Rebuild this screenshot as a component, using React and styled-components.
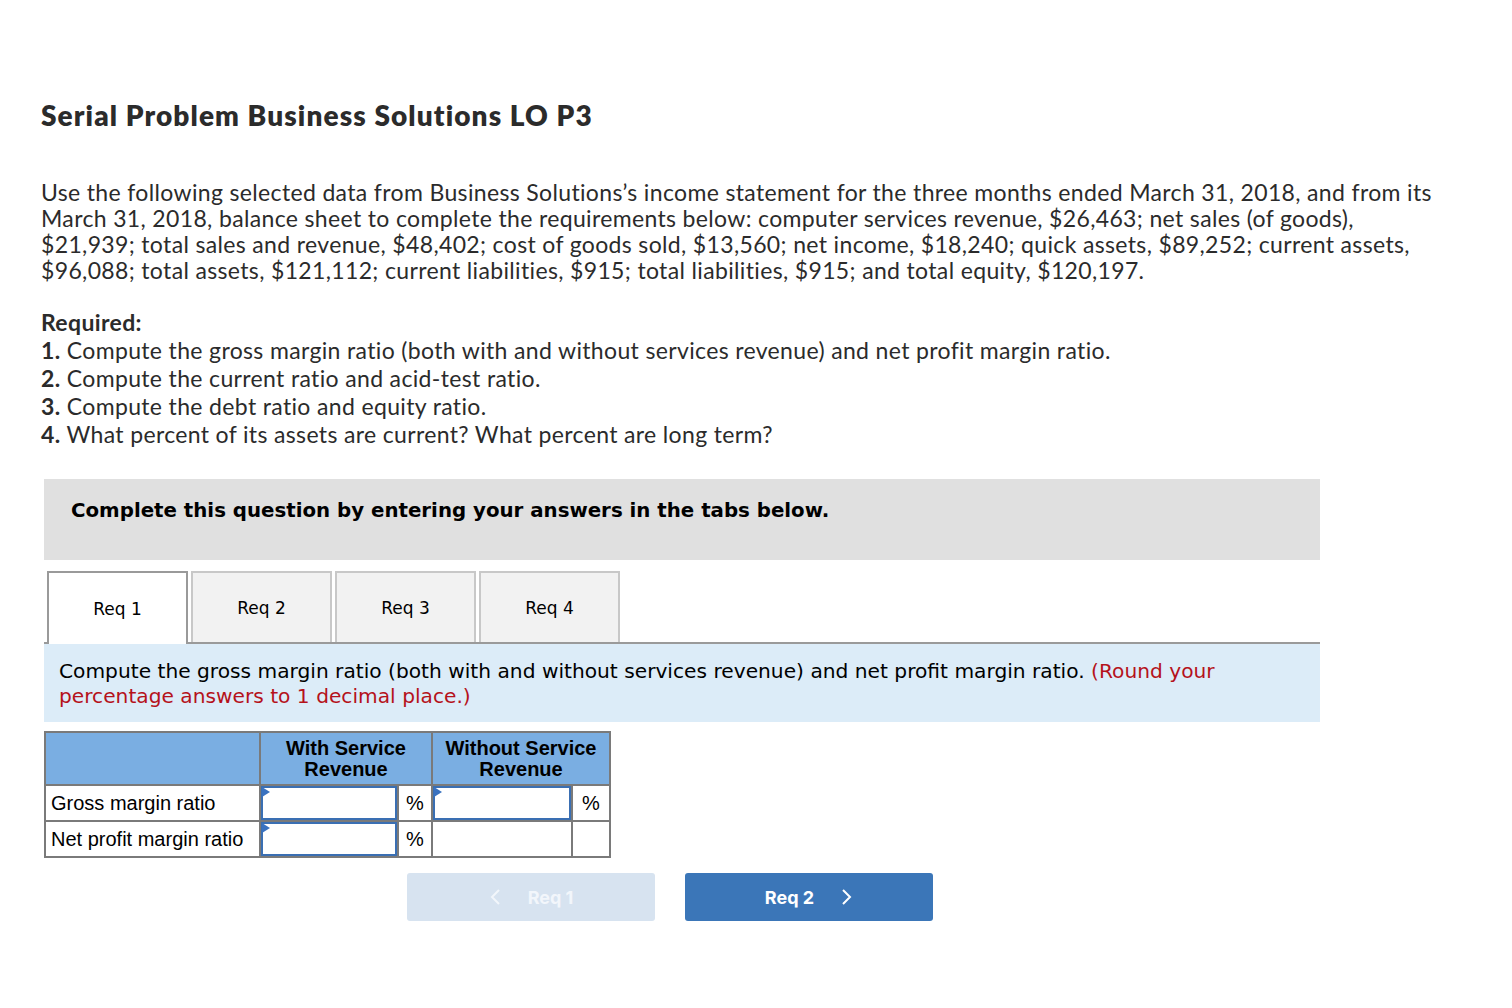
import React from 'react';
import styled, { createGlobalStyle } from 'styled-components';

const Global = createGlobalStyle`
  body {
    margin: 0;
    background: #fff;
    font-family: "Lato", "Open Sans", sans-serif;
    color: #2b2b2b;
  }
`;

const Page = styled.div`
  padding: 98px 0 0 41px;
`;

const Title = styled.h1`
  margin: 0;
  font-size: 28px;
  font-weight: 800;
  line-height: 34px;
  letter-spacing: 1.1px;
  color: #2b2b2b;
`;

const Para = styled.p`
  margin: 47px 0 0;
  font-size: 23px;
  line-height: 26px;
  letter-spacing: 0.35px;
  white-space: nowrap;
`;

const Required = styled.div`
  margin-top: 25px;
  font-size: 23px;
  line-height: 28px;
  letter-spacing: 0.35px;
  white-space: nowrap;
`;

const Work = styled.div`
  margin: 31px 0 0 3px;
  width: 1276px;
`;

const Banner = styled.div`
  background: #e0e0e0;
  height: 81px;
  padding: 20px 0 0 27px;
  box-sizing: border-box;
  font-family: "DejaVu Sans", Verdana, sans-serif;
  font-weight: 700;
  font-size: 19.8px;
  color: #000;
`;

const Tabs = styled.div`
  display: flex;
  gap: 3px;
  margin-top: 11px;
  padding-left: 3px;
  border-bottom: 2px solid #9a9a9a;
`;

const Tab = styled.div`
  width: 141px;
  box-sizing: border-box;
  display: flex;
  align-items: center;
  justify-content: center;
  font-family: "DejaVu Sans", Tahoma, sans-serif;
  font-size: 17px;
  color: #000;
  background: ${p => (p.active ? '#fff' : '#f2f2f2')};
  border: 2px solid ${p => (p.active ? '#9a9a9a' : '#c8c8c8')};
  border-bottom: none;
  margin-bottom: ${p => (p.active ? '-2px' : '0')};
  height: ${p => (p.active ? '73px' : '71px')};
`;

const Prompt = styled.div`
  background: #dcecf8;
  padding: 15px 15px 13px 15px;
  font-family: "DejaVu Sans", Verdana, sans-serif;
  font-size: 20.2px;
  line-height: 25px;
  color: #000;
`;

const Red = styled.span`
  color: #b5121b;
`;

const Table = styled.table`
  margin-top: 9px;
  border-collapse: collapse;
  font-family: "Liberation Sans", Arial, sans-serif;
  font-size: 20px;
  color: #000;
  border: 2px solid #7a7a7a;
`;

const Th = styled.th`
  background: #7aaee2;
  border: 2px solid #7a7a7a;
  font-weight: 700;
  font-size: 20px;
  line-height: 21px;
  padding: 5px 4px 4px;
  height: 52px;
  box-sizing: border-box;
  width: ${p => p.w}px;
`;

const Td = styled.td`
  border: 2px solid #7a7a7a;
  height: 36px;
  box-sizing: border-box;
  padding: 0 ${p => (p.pad ? '5px' : '0')};
  width: ${p => p.w || 'auto'};
  text-align: ${p => (p.center ? 'center' : 'left')};
  white-space: nowrap;
`;

const InputBox = styled.div`
  position: relative;
  height: 34px;
  box-sizing: border-box;
  border: 2px solid #3a6fb3;
  background: #fff;
  &::before {
    content: '';
    position: absolute;
    left: -1px;
    top: -1px;
    border-left: 8px solid #3a72c0;
    border-top: 5px solid transparent;
    border-bottom: 5px solid transparent;
  }
`;

const Nav = styled.div`
  display: flex;
  gap: 30px;
  margin: 15px 0 0 363px;
`;

const NavButton = styled.div`
  width: 248px;
  height: 48px;
  border-radius: 3px;
  display: flex;
  align-items: center;
  justify-content: center;
  gap: 27px;
  font-family: "Inter", "Roboto", sans-serif;
  font-weight: 700;
  font-size: 18px;
  color: ${p => (p.disabled ? '#f2f6fb' : '#fff')};
  background: ${p => (p.disabled ? '#d7e3f0' : '#3b76b8')};
`;

const Chevron = ({ left }) => (
  <svg width="12" height="18" viewBox="0 0 12 18" fill="none">
    <path
      d={left ? 'M10 2 L3 9 L10 16' : 'M2 2 L9 9 L2 16'}
      stroke="currentColor"
      strokeWidth="2"
    />
  </svg>
);

export default function App() {
  return (
    <Page>
      <Global />
      <Title>Serial Problem Business Solutions LO P3</Title>
      <Para>
        Use the following selected data from Business Solutions’s income statement for the three months ended March 31, 2018, and from its
        <br />
        March 31, 2018, balance sheet to complete the requirements below: computer services revenue, $26,463; net sales (of goods),
        <br />
        $21,939; total sales and revenue, $48,402; cost of goods sold, $13,560; net income, $18,240; quick assets, $89,252; current assets,
        <br />
        $96,088; total assets, $121,112; current liabilities, $915; total liabilities, $915; and total equity, $120,197.
      </Para>
      <Required>
        <b>Required:</b>
        <br />
        <b>1.</b> Compute the gross margin ratio (both with and without services revenue) and net profit margin ratio.
        <br />
        <b>2.</b> Compute the current ratio and acid-test ratio.
        <br />
        <b>3.</b> Compute the debt ratio and equity ratio.
        <br />
        <b>4.</b> What percent of its assets are current? What percent are long term?
      </Required>
      <Work>
        <Banner>Complete this question by entering your answers in the tabs below.</Banner>
        <Tabs>
          <Tab active>Req 1</Tab>
          <Tab>Req 2</Tab>
          <Tab>Req 3</Tab>
          <Tab>Req 4</Tab>
        </Tabs>
        <Prompt>
          Compute the gross margin ratio (both with and without services revenue) and net profit margin ratio.{' '}
          <Red>
            (Round your
            <br />
            percentage answers to 1 decimal place.)
          </Red>
        </Prompt>
        <Table>
          <thead>
            <tr>
              <Th w={215}></Th>
              <Th w={172} colSpan={2}>With Service<br />Revenue</Th>
              <Th w={178} colSpan={2}>Without Service<br />Revenue</Th>
            </tr>
          </thead>
          <tbody>
            <tr>
              <Td pad>Gross margin ratio</Td>
              <Td w="137px"><InputBox /></Td>
              <Td w="34px" center>%</Td>
              <Td w="140px"><InputBox /></Td>
              <Td w="38px" center>%</Td>
            </tr>
            <tr>
              <Td pad>Net profit margin ratio</Td>
              <Td><InputBox /></Td>
              <Td center>%</Td>
              <Td></Td>
              <Td></Td>
            </tr>
          </tbody>
        </Table>
        <Nav>
          <NavButton disabled>
            <Chevron left />
            <span>Req 1</span>
          </NavButton>
          <NavButton>
            <span>Req 2</span>
            <Chevron />
          </NavButton>
        </Nav>
      </Work>
    </Page>
  );
}
